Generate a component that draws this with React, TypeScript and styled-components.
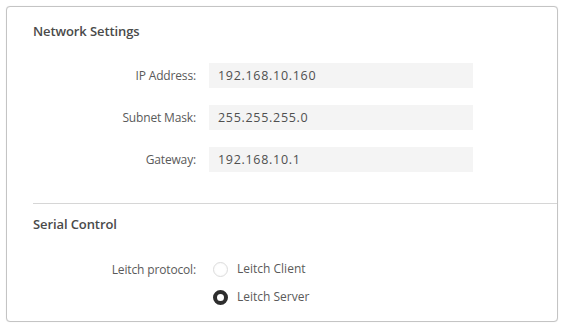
import React from "react";
import styled, { createGlobalStyle } from "styled-components";

const Global = createGlobalStyle`
  html, body { margin: 0; padding: 0; background: #fff; }
  body { font-family: "Open Sans", "Liberation Sans", sans-serif; }
`;

const Page = styled.div`
  width: 562px;
  height: 326px;
  box-sizing: border-box;
  padding: 6px 4px 4px 6px;
`;

const Panel = styled.div`
  box-sizing: border-box;
  width: 552px;
  height: 316px;
  border: 1.5px solid #c4c4c4;
  border-radius: 4px;
  box-shadow: 0 0 1px rgba(0,0,0,0.15);
  background: #fff;
  display: flex;
  flex-direction: column;
`;

const Section = styled.div<{ $top: number; $bottom: number }>`
  padding: ${(p) => p.$top}px 0 ${(p) => p.$bottom}px 26px;
  display: flex;
  flex-direction: column;
`;

const Heading = styled.div`
  font-size: 13px;
  font-weight: 600;
  color: #4a4a4a;
  line-height: 18px;
  letter-spacing: -0.1px;
`;

const Form = styled.div<{ $mt: number; $gap: number }>`
  margin-top: ${(p) => p.$mt}px;
  display: grid;
  grid-template-columns: 163px auto;
  column-gap: 13px;
  row-gap: ${(p) => p.$gap}px;
  align-items: center;
`;

const Label = styled.div<{ $top?: boolean }>`
  font-size: 12px;
  color: #5a5a5a;
  text-align: right;
  line-height: 17px;
  letter-spacing: -0.15px;
  align-self: ${(p) => (p.$top ? "start" : "center")};
`;

const Field = styled.div`
  width: 264px;
  height: 25px;
  box-sizing: border-box;
  background: #f4f4f4;
  padding-left: 9px;
  font-size: 12.5px;
  letter-spacing: 0.7px;
  color: #4f4f4f;
  display: flex;
  align-items: center;
`;

const Divider = styled.div`
  height: 1px;
  background: #d6d6d6;
  margin-left: 26px;
`;

const RadioGroup = styled.div`
  display: flex;
  flex-direction: column;
  gap: 12px;
  padding-left: 4px;
`;

const RadioRow = styled.label`
  display: flex;
  align-items: center;
  gap: 9px;
  font-size: 12px;
  color: #5a5a5a;
  line-height: 16px;
`;

const RadioDot = styled.span<{ $on: boolean }>`
  width: 15px;
  height: 15px;
  box-sizing: border-box;
  border-radius: 50%;
  background: #fff;
  border: ${(p) => (p.$on ? "4px solid #2e2e2e" : "1.5px solid #dcdcdc")};
  box-shadow: ${(p) => (p.$on ? "none" : "inset 0 0 2px rgba(0,0,0,0.05)")};
`;

const fields = [
  ["IP Address:", "192.168.10.160"],
  ["Subnet Mask:", "255.255.255.0"],
  ["Gateway:", "192.168.10.1"],
];

export default function App() {
  return (
    <>
      <Global />
      <Page>
        <Panel>
          <Section $top={15} $bottom={31}>
            <Heading>Network Settings</Heading>
            <Form $mt={23} $gap={17}>
              {fields.map(([l, v]) => (
                <React.Fragment key={l}>
                  <Label>{l}</Label>
                  <Field>{v}</Field>
                </React.Fragment>
              ))}
            </Form>
          </Section>
          <Divider />
          <Section $top={11} $bottom={0}>
            <Heading>Serial Control</Heading>
            <Form $mt={28} $gap={0}>
              <Label $top>Leitch protocol:</Label>
              <RadioGroup>
                <RadioRow>
                  <RadioDot $on={false} />
                  Leitch Client
                </RadioRow>
                <RadioRow>
                  <RadioDot $on={true} />
                  Leitch Server
                </RadioRow>
              </RadioGroup>
            </Form>
          </Section>
        </Panel>
      </Page>
    </>
  );
}
